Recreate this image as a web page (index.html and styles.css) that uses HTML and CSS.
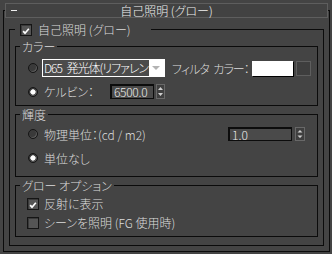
FILE: index.html
```html
<!DOCTYPE html>
<html lang="ja">
<head>
    <meta charset="UTF-8">
    <title>自己照明 (グロー)</title>
    <link rel="stylesheet" href="styles.css">
</head>
<body>
    <fieldset class="panel">
        <legend class="title-bar">
            <span class="collapse"></span>
            <span class="title">自己照明 (グロー)</span>
        </legend>

        <fieldset class="group main">
            <legend class="check-legend">
                <span class="checkbox">
                    <svg width="12" height="12" viewBox="0 0 12 12"><path d="M2.6 6.2 L4.8 8.6 L9.4 3.2" fill="none" stroke="#fff" stroke-width="2"/></svg>
                </span>
                <span>自己照明 (グロー)</span>
            </legend>

            <fieldset class="group sub color">
                <legend>カラー</legend>
                <div class="row first">
                    <span class="radio"></span>
                    <div class="combo">
                        <span class="combo-text">D65 発光体(リファレン</span>
                        <span class="combo-arrow"></span>
                    </div>
                    <span class="field-label filter">フィルタ カラー：</span>
                    <span class="swatch"></span>
                    <span class="swatch-btn"></span>
                </div>
                <div class="row second">
                    <span class="radio on"></span>
                    <span class="field-label kelvin">ケルビン：</span>
                    <span class="spinner kelvin-spin">6500.0</span>
                    <span class="spin-arrows">
                        <svg width="9" height="15" viewBox="0 0 9 15"><rect x="0.5" y="0.5" width="8" height="14" fill="#3f3f3f" stroke="#686868"/><path d="M2 6 L4.5 3 L7 6 Z M2 9 L4.5 12 L7 9 Z" fill="#cfcfcf"/></svg>
                    </span>
                </div>
            </fieldset>

            <fieldset class="group sub luminance">
                <legend>輝度</legend>
                <div class="row first">
                    <span class="radio"></span>
                    <span class="field-label physical">物理単位：(cd / m2)</span>
                    <span class="spinner lum-spin">1.0</span>
                    <span class="spin-arrows">
                        <svg width="10" height="14" viewBox="0 0 10 14"><rect x="0.5" y="0.5" width="9" height="13" fill="#3f3f3f" stroke="#686868"/><path d="M2.5 5.5 L5 3 L7.5 5.5 Z M2.5 8.5 L5 11 L7.5 8.5 Z" fill="#cfcfcf"/></svg>
                    </span>
                </div>
                <div class="row second">
                    <span class="radio on"></span>
                    <span class="field-label">単位なし</span>
                </div>
            </fieldset>

            <fieldset class="group sub glow">
                <legend>グロー オプション</legend>
                <div class="row first">
                    <span class="checkbox">
                        <svg width="12" height="12" viewBox="0 0 12 12"><path d="M2.6 6.2 L4.8 8.6 L9.4 3.2" fill="none" stroke="#fff" stroke-width="2"/></svg>
                    </span>
                    <span class="field-label">反射に表示</span>
                </div>
                <div class="row second">
                    <span class="checkbox"></span>
                    <span class="field-label">シーンを照明 (FG 使用時)</span>
                </div>
            </fieldset>
        </fieldset>
    </fieldset>
</body>
</html>
```

FILE: styles.css
```css
* {
    box-sizing: border-box;
}

body {
    margin: 0;
    background-color: #444444;
    font-family: "Noto Sans CJK JP", "Noto Sans", sans-serif;
    font-size: 12px;
    font-weight: 300;
    line-height: 13px;
    color: #dcdcdc;
    font-feature-settings: "palt" 1;
    overflow: hidden;
}

/* cadre du rollout */
.panel {
    width: 327px;
    margin: 3px 0 0 3px;
    padding: 0 1px 5px;
    border: 1px solid #0b0b0b;
    min-width: 0;
}

.title-bar {
    width: 100%;
    height: 15px;
    margin-bottom: 4px;
    padding: 0;
    border: 1px solid #5e5e5e;
    background-color: #424242;
    display: grid;
    grid-template-columns: 1fr auto 1fr;
    align-items: center;
    color: #f0f0f0;
}

.collapse {
    width: 6px;
    height: 1px;
    margin-left: 5px;
    background-color: #eeeeee;
}

.title {
    line-height: 13px;
}

.group {
    margin: 0;
    padding: 0;
    border: 1px solid #0b0b0b;
    min-width: 0;
}

.main {
    margin: 1px 4px 0;
    padding: 4px 5px 8px;
}

.check-legend {
    width: 136px;
    padding: 0 0 0 5px;
    display: flex;
    align-items: center;
    gap: 6px;
}

.sub {
    padding: 0 4px;
}

.sub legend {
    padding: 0 2px;
}

.sub + .sub {
    margin-top: 2px;
}

.row {
    display: flex;
    align-items: center;
    padding-left: 8px;
}

/* カラー */
.color {
    padding-top: 6px;
    padding-bottom: 6px;
}

.color .first {
    height: 18px;
}

.color .second {
    height: 15px;
    margin-top: 7px;
}

/* 輝度 */
.luminance {
    padding-top: 5px;
    padding-bottom: 10px;
}

.luminance .row {
    height: 16px;
}

.luminance .second {
    margin-top: 8px;
}

/* グロー オプション */
.glow {
    padding-top: 5px;
    padding-bottom: 7px;
}

.glow .row {
    height: 13px;
    padding-left: 7px;
}

.glow .second {
    margin-top: 6px;
}

.glow .checkbox {
    margin-right: 5px;
}

/* contrôles */
.radio {
    width: 10px;
    height: 10px;
    border-radius: 50%;
    border: 1px solid #151515;
    background: #3a3a3a;
    box-shadow: inset -1px -1px 0 #5c5c5c;
    margin-right: 6px;
    flex: none;
}

.radio.on {
    background: radial-gradient(circle, #ffffff 0 2px, #d0d0d0 2.5px, #3a3a3a 3px);
}

.color .first .radio {
    margin-right: 4px;
}

.checkbox {
    width: 12px;
    height: 12px;
    border: 1px solid #151515;
    background-color: #555555;
    box-shadow: inset 1px 1px 0 #3a3a3a;
    display: flex;
    flex: none;
}

.combo {
    width: 123px;
    height: 18px;
    padding: 1px;
    background-color: #ffffff;
    display: flex;
    align-items: center;
}

.combo-text {
    height: 16px;
    line-height: 16px;
    padding: 0 1px;
    white-space: nowrap;
    letter-spacing: -1px;
    word-spacing: 3px;
    background-color: #4b4b4b;
    color: #ffffff;
}

.combo-arrow {
    margin-left: auto;
    margin-right: 4px;
    width: 0;
    height: 0;
    border-left: 4px solid transparent;
    border-right: 4px solid transparent;
    border-top: 4px solid #b3b3b3;
}

.field-label {
    white-space: nowrap;
}

.filter {
    width: 80px;
    margin-left: 7px;
    letter-spacing: -1px;
    word-spacing: 3px;
}

.kelvin {
    width: 66px;
}

.physical {
    width: 184px;
}

.swatch {
    width: 41px;
    height: 15px;
    background-color: #ffffff;
    box-shadow: 1px 1px 0 #000000;
}

.swatch-btn {
    width: 15px;
    height: 15px;
    margin-left: 3px;
    border: 1px solid #5e5e5e;
    background-color: #3e3e3e;
}

.spinner {
    height: 15px;
    padding-left: 2px;
    border: 1px solid #0c0c0c;
    border-width: 2px 1px 1px 2px;
    background-color: #4a4a4a;
    color: #ececec;
    line-height: 12px;
}

.kelvin-spin {
    width: 44px;
    letter-spacing: -0.3px;
}

.lum-spin {
    width: 64px;
    height: 14px;
}

.spin-arrows {
    display: flex;
    margin-left: 2px;
}

.luminance .spin-arrows {
    margin-left: 3px;
}
```
